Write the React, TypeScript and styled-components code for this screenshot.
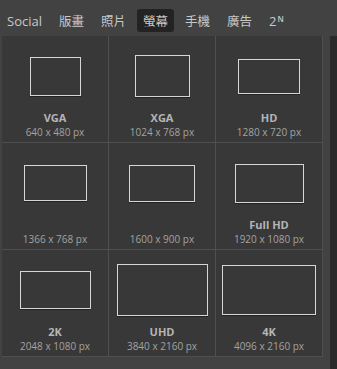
import styled, { createGlobalStyle } from "styled-components";

const GlobalStyle = createGlobalStyle`
    html, body {
        margin: 0;
        padding: 0;
        background: #424242;
    }
    body {
        font-family: "Open Sans", "Noto Sans CJK TC", sans-serif;
        width: 337px;
        height: 369px;
        overflow: hidden;
    }
`;

type Preset = {
    name?: string,
    size: string,
    w: number,
    h: number,
}

const presets: Preset[] = [
    { name: "VGA", size: "640 x 480 px", w: 51, h: 39 },
    { name: "XGA", size: "1024 x 768 px", w: 55, h: 42 },
    { name: "HD", size: "1280 x 720 px", w: 62, h: 35 },
    { size: "1366 x 768 px", w: 63, h: 36 },
    { size: "1600 x 900 px", w: 66, h: 37 },
    { name: "Full HD", size: "1920 x 1080 px", w: 69, h: 39 },
    { name: "2K", size: "2048 x 1080 px", w: 71, h: 38 },
    { name: "UHD", size: "3840 x 2160 px", w: 91, h: 52 },
    { name: "4K", size: "4096 x 2160 px", w: 94, h: 50 },
];

const tabs = ["版畫", "照片", "螢幕", "手機", "廣告"];

const Page = styled.div`
    width: 337px;
    height: 369px;
    background: #424242;
    display: flex;
    flex-direction: column;
`;

const TabBar = styled.div`
    height: 36px;
    box-sizing: border-box;
    padding: 9px 0 4px 1px;
    display: flex;
    gap: 5px;
`;

const Tab = styled.div<{ $active?: boolean, $cjk?: boolean }>`
    height: 23px;
    padding: 0 6px;
    display: flex;
    align-items: center;
    border-radius: 3px;
    font-size: ${({ $cjk }) => ($cjk ? "12.5px" : "13px")};
    color: #c9c9c9;
    background: ${({ $active }) => ($active ? "#232323" : "transparent")};
    font-family: "Open Sans", "Noto Sans CJK TC", sans-serif;

    sup {
        font-size: 8px;
        font-weight: 600;
        margin-left: 1px;
        position: relative;
        top: -2px;
    }
`;

const Body = styled.div`
    flex: 1;
    display: flex;
`;

const Grid = styled.div`
    margin-left: 2px;
    width: 321px;
    display: grid;
    grid-template-columns: repeat(3, 107px);
    grid-auto-rows: 107px;
    align-self: flex-start;
`;

const Cell = styled.div`
    background: #383838;
    border-right: 1px solid #4f4f4f;
    border-bottom: 1px solid #4f4f4f;
    display: flex;
    flex-direction: column;
    align-items: center;
`;

const RectArea = styled.div`
    height: 75px;
    box-sizing: border-box;
    padding-top: 5px;
    display: flex;
    align-items: center;
    justify-content: center;
`;

const Frame = styled.div`
    box-sizing: border-box;
    border: 1px solid #d6d6d6;
    box-shadow: 0 1px 0 #222;
`;

const Name = styled.div`
    height: 14px;
    line-height: 14px;
    font-size: 11px;
    font-weight: 700;
    color: #b5b5b5;
`;

const Size = styled.div`
    height: 14px;
    line-height: 14px;
    font-size: 10px;
    color: #a3a3a3;
`;

const Gutter = styled.div`
    flex: 1;
`;

const Scrollbar = styled.div`
    width: 7px;
    background: #2b2b2b;
`;

export default function App() {
    return (
        <Page>
            <GlobalStyle />
            <TabBar>
                <Tab>Social</Tab>
                {tabs.map((t) => (
                    <Tab key={t} $cjk $active={t === "螢幕"}>{t}</Tab>
                ))}
                <Tab>2<sup>N</sup></Tab>
            </TabBar>
            <Body>
                <Grid>
                    {presets.map((p) => (
                        <Cell key={p.size}>
                            <RectArea>
                                <Frame style={{ width: p.w, height: p.h }} />
                            </RectArea>
                            <Name>{p.name ?? ""}</Name>
                            <Size>{p.size}</Size>
                        </Cell>
                    ))}
                </Grid>
                <Gutter />
                <Scrollbar />
            </Body>
        </Page>
    );
}
